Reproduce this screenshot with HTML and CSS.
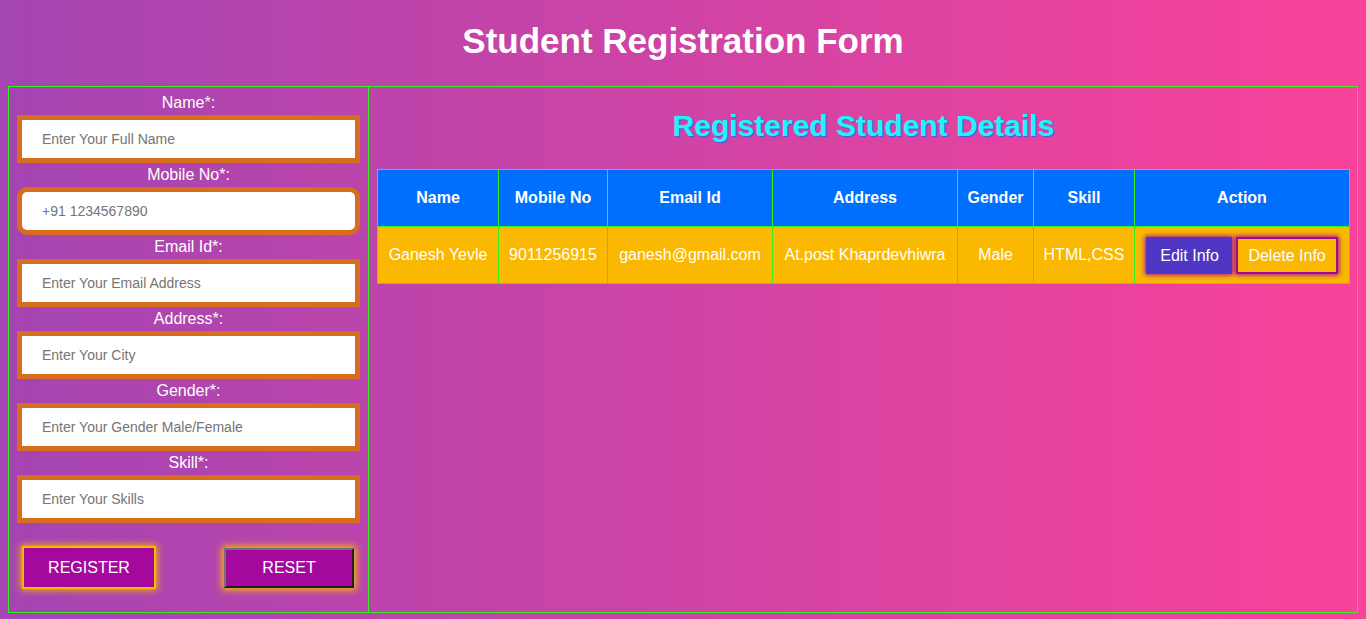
FILE: index.html
```html
<!DOCTYPE html>
<html lang="en">
<head>
<meta charset="utf-8">
<title>Student Registration Form</title>
<link rel="stylesheet" href="styles.css">
</head>
<body>
<div class="page">
  <h1 class="title">Student Registration Form</h1>
  <div class="container">
    <form class="form-panel">
      <div class="field">
        <label class="label">Name*:</label>
        <input class="input" type="text" placeholder="Enter Your Full Name">
      </div>
      <div class="field">
        <label class="label">Mobile No*:</label>
        <input class="input input-round" type="text" placeholder="+91 1234567890">
      </div>
      <div class="field">
        <label class="label">Email Id*:</label>
        <input class="input" type="text" placeholder="Enter Your Email Address">
      </div>
      <div class="field">
        <label class="label">Address*:</label>
        <input class="input" type="text" placeholder="Enter Your City">
      </div>
      <div class="field">
        <label class="label">Gender*:</label>
        <input class="input" type="text" placeholder="Enter Your Gender Male/Female">
      </div>
      <div class="field">
        <label class="label">Skill*:</label>
        <input class="input" type="text" placeholder="Enter Your Skills">
      </div>
      <div class="btn-row">
        <button type="button" class="btn btn-register">REGISTER</button>
        <button type="button" class="btn btn-reset">RESET</button>
      </div>
    </form>
    <div class="details-panel">
      <h2 class="subtitle">Registered Student Details</h2>
      <table class="table">
        <colgroup>
          <col class="c-name"><col class="c-mobile"><col class="c-email"><col class="c-address"><col class="c-gender"><col class="c-skill"><col class="c-action">
        </colgroup>
        <thead>
          <tr>
            <th>Name</th><th>Mobile No</th><th>Email Id</th><th>Address</th><th>Gender</th><th>Skill</th><th>Action</th>
          </tr>
        </thead>
        <tbody>
          <tr>
            <td>Ganesh Yevle</td><td>9011256915</td><td>ganesh@gmail.com</td><td>At.post Khaprdevhiwra</td><td>Male</td><td>HTML,CSS</td>
            <td><button type="button" class="act act-edit">Edit Info</button> <button type="button" class="act act-delete">Delete Info</button></td>
          </tr>
        </tbody>
      </table>
    </div>
  </div>
</div>
</body>
</html>
```

FILE: styles.css
```css
html, body {
  margin: 0;
  padding: 0;
}
body {
  min-height: 100vh;
  background: linear-gradient(to right, #a445b2, #fa4299);
  font-family: "Liberation Sans", Arial, sans-serif;
  color: #fff;
}
.page {
  padding: 0 8px;
}
.title {
  margin: 0 0 25px;
  padding-top: 20px;
  font-size: 35px;
  line-height: 41px;
  font-weight: bold;
  text-align: center;
  color: #fff;
}
.container {
  display: flex;
  border: 1px solid #33f01f;
  height: 527px;
  box-sizing: border-box;
}
.form-panel {
  width: 360px;
  flex: none;
  box-sizing: border-box;
  border-right: 1px solid #33f01f;
  padding: 4px 8px 0;
  margin: 0;
}
.field {
  display: flex;
  flex-direction: column;
}
.label {
  display: block;
  text-align: center;
  font-size: 16px;
  line-height: 24px;
  color: #fff;
}
.input {
  display: block;
  width: 100%;
  height: 48px;
  box-sizing: border-box;
  border: 5px solid #d86e1d;
  background: #fff;
  padding: 0 20px;
  font-family: "Liberation Sans", Arial, sans-serif;
  font-size: 14px;
  outline: none;
  margin: 0;
}
.input::placeholder {
  color: #757575;
}
.input-round {
  border-radius: 10px;
}
.btn-row {
  display: flex;
  justify-content: space-between;
  align-items: center;
  margin-top: 23px;
  padding: 0 6px 0 5px;
  height: 43px;
}
.btn {
  background: #a4089c;
  color: #fff;
  font-family: "Liberation Sans", Arial, sans-serif;
  font-size: 16px;
  text-transform: uppercase;
  box-sizing: border-box;
  cursor: pointer;
  padding: 0;
}
.btn-register {
  width: 134px;
  height: 43px;
  border: 2px solid #fbb800;
  box-shadow: 0 0 7px 1px #fbb800;
}
.btn-reset {
  width: 130px;
  height: 40px;
  border: 2px solid;
  border-color: #727272 #1f1f1f #1f1f1f #727272;
  box-shadow: 0 0 7px 2px #fbb800;
}
.details-panel {
  flex: 1;
  padding: 0 8px;
}
.subtitle {
  margin: 0 0 26px;
  padding-top: 21px;
  font-size: 30px;
  line-height: 35px;
  font-weight: bold;
  text-align: center;
  color: #1ff4f6;
  text-shadow: 1px 1px 1px #3a5cf0;
}
.table {
  width: 972px;
  border-collapse: collapse;
  table-layout: fixed;
}
.c-name { width: 121px; }
.c-mobile { width: 109px; }
.c-email { width: 165px; }
.c-address { width: 185px; }
.c-gender { width: 76px; }
.c-skill { width: 101px; }
.c-action { width: 215px; }
.table tr {
  height: 57px;
}
.table th,
.table td {
  border: 1px solid #33f01f;
  padding: 0;
  text-align: center;
  vertical-align: middle;
  font-size: 16px;
  line-height: 18px;
  color: #fff;
  white-space: nowrap;
}
.table th {
  background: #006ffd;
  font-weight: bold;
}
.table td {
  background: #fbb800;
}
.act {
  font-family: "Liberation Sans", Arial, sans-serif;
  font-size: 16px;
  line-height: 17px;
  color: #fff;
  border: 2px solid #a3089c;
  box-shadow: 0 0 5px 1px #a3089c;
  cursor: pointer;
  margin: 0;
  vertical-align: middle;
}
.act-edit {
  background: #4f37c3;
  border-color: #4f37c3;
  padding: 8px 11px 8px 12px;
}
.act-delete {
  background: #fbb800;
  padding: 8px 10px;
}
```
